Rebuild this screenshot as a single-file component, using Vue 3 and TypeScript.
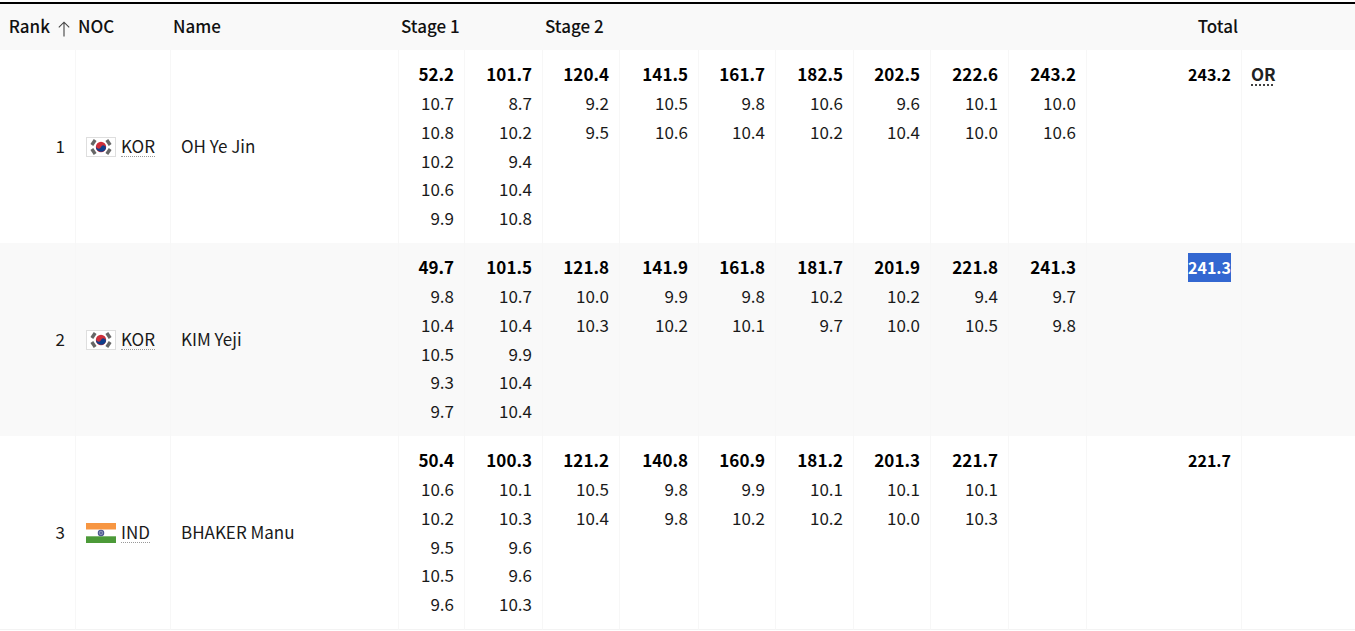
<script setup lang="ts">
interface Athlete {
  rank: number
  noc: string
  name: string
  shots: string[][]
  total: string
  selected?: boolean
  note?: string
}

const athletes: Athlete[] = [
  {
    rank: 1,
    noc: 'KOR',
    name: 'OH Ye Jin',
    total: '243.2',
    note: 'OR',
    shots: [
      ['52.2', '10.7', '10.8', '10.2', '10.6', '9.9'],
      ['101.7', '8.7', '10.2', '9.4', '10.4', '10.8'],
      ['120.4', '9.2', '9.5'],
      ['141.5', '10.5', '10.6'],
      ['161.7', '9.8', '10.4'],
      ['182.5', '10.6', '10.2'],
      ['202.5', '9.6', '10.4'],
      ['222.6', '10.1', '10.0'],
      ['243.2', '10.0', '10.6'],
    ],
  },
  {
    rank: 2,
    noc: 'KOR',
    name: 'KIM Yeji',
    total: '241.3',
    selected: true,
    shots: [
      ['49.7', '9.8', '10.4', '10.5', '9.3', '9.7'],
      ['101.5', '10.7', '10.4', '9.9', '10.4', '10.4'],
      ['121.8', '10.0', '10.3'],
      ['141.9', '9.9', '10.2'],
      ['161.8', '9.8', '10.1'],
      ['181.7', '10.2', '9.7'],
      ['201.9', '10.2', '10.0'],
      ['221.8', '9.4', '10.5'],
      ['241.3', '9.7', '9.8'],
    ],
  },
  {
    rank: 3,
    noc: 'IND',
    name: 'BHAKER Manu',
    total: '221.7',
    shots: [
      ['50.4', '10.6', '10.2', '9.5', '10.5', '9.6'],
      ['100.3', '10.1', '10.3', '9.6', '9.6', '10.3'],
      ['121.2', '10.5', '10.4'],
      ['140.8', '9.8', '9.8'],
      ['160.9', '9.9', '10.2'],
      ['181.2', '10.1', '10.2'],
      ['201.3', '10.1', '10.0'],
      ['221.7', '10.1', '10.3'],
      [],
    ],
  },
]

const shotColumnWidths: number[] = [66, 78, 77, 79, 77, 78, 77, 78, 78]

const trigrams: { x: number; y: number; r: number }[] = [
  { x: 7.5, y: 5.5, r: -56 },
  { x: 22.5, y: 5.5, r: 56 },
  { x: 7.5, y: 14.5, r: 56 },
  { x: 22.5, y: 14.5, r: -56 },
]
</script>

<template>
  <table class="results">
    <colgroup>
      <col class="col-rank" />
      <col class="col-noc" />
      <col class="col-name" />
      <col v-for="(w, i) in shotColumnWidths" :key="i" :style="{ width: w + 'px' }" />
      <col class="col-total" />
      <col />
    </colgroup>
    <thead>
      <tr>
        <th class="right">
          Rank<svg class="sort" width="12" height="16" viewBox="0 0 12 16" aria-hidden="true">
            <path d="M6 15.5V1.2M.8 6.4 6 1.2l5.2 5.2" fill="none" stroke="#444" stroke-width="1.1" />
          </svg>
        </th>
        <th>NOC</th>
        <th>Name</th>
        <th>Stage 1</th>
        <th></th>
        <th>Stage 2</th>
        <th></th>
        <th></th>
        <th></th>
        <th></th>
        <th></th>
        <th></th>
        <th class="right total-head">Total</th>
        <th></th>
      </tr>
    </thead>
    <tbody>
      <tr v-for="a in athletes" :key="a.rank">
        <td class="rank">{{ a.rank }}</td>
        <td class="noc">
          <span class="noc-inner">
            <svg v-if="a.noc === 'KOR'" class="flag" width="30" height="20" viewBox="0 0 30 20" aria-hidden="true">
              <rect x="0.5" y="0.5" width="29" height="19" fill="#fff" stroke="#dedede" />
              <g v-for="(t, i) in trigrams" :key="i" :transform="`translate(${t.x} ${t.y}) rotate(${t.r})`">
                <rect x="-3" y="-1.7" width="6" height="3.4" fill="#666" />
              </g>
              <circle cx="15" cy="10" r="5.2" fill="#cd2e3a" />
              <path d="M10 8.7a2.6 2.6 0 0 0 5 1.3 2.6 2.6 0 0 1 5 1.3A5.2 5.2 0 0 1 10 8.7z" fill="#0f3f8c" />
            </svg>
            <svg v-else class="flag" width="30" height="20" viewBox="0 0 30 20" aria-hidden="true">
              <rect width="30" height="6.7" fill="#f79642" />
              <rect y="6.7" width="30" height="6.6" fill="#fff" />
              <rect y="13.3" width="30" height="6.7" fill="#4c9a38" />
              <circle cx="15" cy="10" r="2.7" fill="#8a90b4" stroke="#4a5590" stroke-width="1.1" />
              <circle cx="15" cy="10" r="0.9" fill="#4a5590" />
            </svg>
            <span class="code">{{ a.noc }}</span>
          </span>
        </td>
        <td class="name">{{ a.name }}</td>
        <td v-for="(col, i) in a.shots" :key="i" class="num">
          <div v-for="(v, j) in col" :key="j" :class="{ cum: j === 0 }">{{ v }}</div>
        </td>
        <td class="num">
          <span :class="['cum', 'total', { selected: a.selected }]">{{ a.total }}</span>
        </td>
        <td class="note">
          <span v-if="a.note" class="mark">{{ a.note }}</span>
        </td>
      </tr>
    </tbody>
  </table>
</template>

<style scoped>
.results {
  width: 1355px;
  margin-top: 2px;
  table-layout: fixed;
  border-collapse: separate;
  border-spacing: 0;
  border-top: 2px solid #000;
  font-family: "Noto Sans CJK KR", "Noto Sans", sans-serif;
  font-size: 17px;
  line-height: 28.8px;
  color: #1a1a1a;
}
.col-rank { width: 76px; }
.col-noc { width: 95px; }
.col-name { width: 228px; }
.col-total { width: 155px; }

thead th {
  height: 44px;
  padding: 0 2px 2px;
  background: #f9f9f9;
  font-weight: 500;
  color: #111;
  text-align: left;
  white-space: nowrap;
}
thead th.right { text-align: right; }
thead th.total-head { padding-right: 4px; }
.sort {
  margin-left: 8px;
  margin-right: 4px;
  vertical-align: -4px;
}

tbody tr:nth-child(even) td { background: #f9f9f9; }
tbody td {
  padding: 10.2px 10px 10px;
  vertical-align: top;
  border-right: 1px solid #f7f7f7;
}
tbody td:last-child { border-right: 0; }
tbody tr:last-child td { border-bottom: 1px solid #f3f3f3; }

tbody td.rank, tbody td.noc, tbody td.name {
  vertical-align: middle;
}
.rank { text-align: right; }
tbody td.note { padding-left: 9px; }
.noc-inner {
  display: flex;
  align-items: center;
  gap: 5px;
}
.flag {
  flex: none;
  margin-top: 1px;
}
.code {
  line-height: 20px;
  border-bottom: 1px dotted #999;
}
.num { text-align: right; }
.cum { font-weight: 700; color: #000; }
.total { font-size: 16px; }
.selected {
  display: inline-block;
  background: #3367d1;
  color: #fff;
}
.mark {
  font-weight: 700;
  color: #222;
  text-decoration: underline dotted #000;
  text-underline-offset: 3px;
}
</style>
